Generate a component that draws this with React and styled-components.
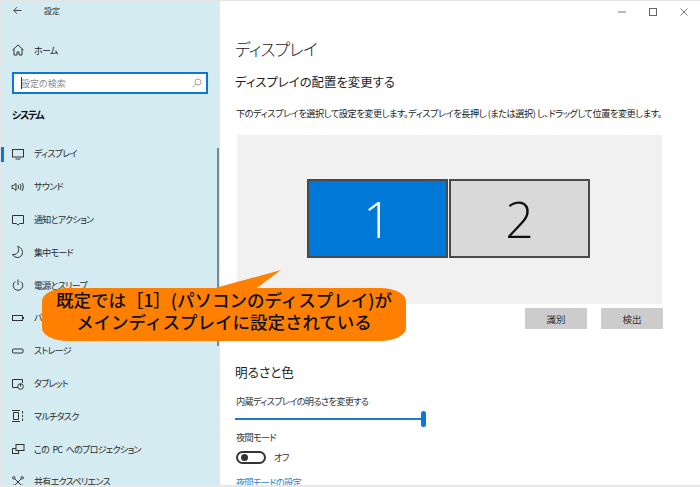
import React from "react";
import styled, { createGlobalStyle } from "styled-components";

const Global = createGlobalStyle`
  html, body { margin: 0; padding: 0; background: #fff; overflow: hidden; }
  * { box-sizing: border-box; }
  body { font-family: "Noto Sans CJK JP", "Noto Sans", sans-serif; color: #222; font-feature-settings: "palt"; }
`;
const Page = styled.div`
  position: relative; width: 700px; height: 487px; display: flex; overflow: hidden;
  background: #fff; border-top: 1px solid #e4e4e4; border-left: 1px solid #e4e4e4; border-bottom: 2px solid #e8e8e8;
`;
const Sidebar = styled.aside`
  position: relative; flex: 0 0 219px; height: 100%; background: #d4ebf2; overflow: hidden;
  display: flex; flex-direction: column;
  & > * { flex: none; }
`;
const TitleBar = styled.div`
  height: 19px; display: flex; align-items: center; padding-left: 12px; gap: 22px; font-size: 8px; color: #333;
`;
const HomeRow = styled.div`
  margin-top: 17px; height: 26px; display: flex; align-items: center; padding-left: 10px; gap: 9px;
  font-size: 9px; letter-spacing: -0.7px; color: #222;
`;
const Search = styled.div`
  margin: 9px 0 0 11px; width: 196px; height: 22px; background: #fff; border: 2px solid #0b78d6;
  display: flex; align-items: center; justify-content: space-between; padding: 0 4px 0 7px;
  font-size: 9px; color: #8a8a8a; position: relative;
  &::before { content: ""; position: absolute; left: 7px; top: 3px; bottom: 3px; width: 1px; background: #333; }
`;
const SectionLabel = styled.div`
  margin: 10px 0 0 11px; height: 22px; line-height: 22px; font-size: 10px; letter-spacing: -1.4px; font-weight: 700; color: #111;
`;
const NavList = styled.div`
  margin-top: 11.6px; display: flex; flex-direction: column;
`;
const NavItem = styled.div`
  position: relative; height: 32.8px; flex: none; display: flex; align-items: center; padding-left: 10px; gap: 9px;
  font-size: 9px; letter-spacing: -0.7px; word-spacing: 2px; color: #2a2a2a; white-space: nowrap;
`;
const Indicator = styled.span`
  position: absolute; left: 0; top: 9px; width: 3px; height: 15px; background: #0b78d6;
`;
const ScrollThumb = styled.div`
  position: absolute; right: 1px; top: 147px; height: 198px; width: 2px; background: #7d8a8f;
`;
const Main = styled.main`
  flex: 1; min-width: 0; display: flex; flex-direction: column; position: relative; padding-left: 15px; overflow: hidden;
  & > * { flex: none; }
`;
const WindowButtons = styled.div`
  align-self: flex-end; height: 22px; display: flex; align-items: center; gap: 23px; padding-right: 12px; color: #666;
`;
const PageTitle = styled.h1`
  margin: 14px 0 0; font-size: 16.5px; letter-spacing: -0.7px; line-height: 24px; font-weight: 300; color: #222;
`;
const Heading = styled.h2`
  margin: 11px 0 0; font-size: 12.4px; line-height: 20px; font-weight: 400; color: #222;
`;
const Description = styled.p`
  margin: 13px 0 0 1px; font-size: 9.2px; letter-spacing: -0.46px; line-height: 16px; color: #222; white-space: nowrap;
`;
const Arrangement = styled.div`
  margin: 14px 0 0 2px; width: 425px; height: 169px; background: #f1f1f1;
  display: flex; justify-content: center; gap: 1px; padding: 44px 2px 0 0;
`;
const Monitor = styled.div`
  width: 141px; height: 79px; border: 2px solid #4a4a4a; display: flex; align-items: center; justify-content: center;
  font-family: "Open Sans", "Noto Sans", sans-serif; font-weight: 300; font-size: 50px; line-height: 1;
  background: ${p => (p.$active ? "#0078d7" : "#d9d9d9")};
  color: ${p => (p.$active ? "#fff" : "#111")};
`;
const ButtonRow = styled.div`
  margin: 4px 0 0 2px; width: 426px; display: flex; justify-content: flex-end; gap: 14px;
`;
const GrayButton = styled.div`
  width: 62px; height: 21px; background: #cccccc; display: flex; align-items: center; justify-content: center;
  font-size: 9.5px; color: #333;
`;
const SubHeading = styled.h3`
  margin: 33px 0 0; font-size: 12.6px; line-height: 20px; font-weight: 400; color: #222;
`;
const SmallLabel = styled.div`
  margin-top: ${p => p.$top}px; font-size: 9.2px; letter-spacing: -0.7px; line-height: 14px; color: #333; padding-left: 1px;
`;
const SliderTrack = styled.div`
  position: relative; margin-top: 10px; width: 190px; height: 2px; background: #1a7fd4;
`;
const SliderThumb = styled.span`
  position: absolute; right: -1px; top: -7px; width: 5px; height: 16px; border-radius: 3px; background: #0b78d6;
`;
const ToggleRow = styled.div`
  margin-top: 6px; display: flex; align-items: center; gap: 8px; font-size: 9.2px; letter-spacing: -0.7px; color: #333; line-height: 14px; padding-left: 1px;
`;
const Toggle = styled.span`
  width: 30px; height: 13px; border: 2px solid #333; border-radius: 7px; display: flex; align-items: center; padding-left: 3px;
  &::before { content: ""; width: 7px; height: 7px; border-radius: 50%; background: #333; }
`;
const LinkText = styled.div`
  margin-top: 11px; font-size: 9.2px; letter-spacing: -0.7px; line-height: 14px; color: #2b7fc8; padding-left: 1px;
`;
const Callout = styled.div`
  position: absolute; left: 41px; top: 287px; width: 364px; height: 53px; padding-bottom: 8px;
  background: #ff8000; border-radius: 26px / 13px;
  display: flex; align-items: center; justify-content: center; text-align: center;
  font-size: 17.5px; line-height: 22px; font-weight: 500; color: #111; white-space: nowrap; font-feature-settings: normal;
`;
const CalloutTail = styled.svg`
  position: absolute; left: 189px; top: 268px; width: 100px; height: 24px;
`;
const IconSvg = styled.svg`
  flex: none; fill: none; stroke: #333; stroke-width: 1;
`;

const I = ({ children }) => <IconSvg width="14" height="14" viewBox="0 0 14 14">{children}</IconSvg>;
const icons = {
  monitor: <I><rect x="1.5" y="2.5" width="11" height="7.5" /><path d="M4.5 12h5" /></I>,
  sound: <I><path d="M1 5.5h1.5L5 3.5v7L2.5 8.5H1z" /><path d="M7 5c.7 1.2.7 2.8 0 4M9 4c1.2 1.8 1.2 4.200 0 6M11 3c1.700 2.400 1.700 5.600 0 8" /></I>,
  message: <I><path d="M1.500 2.500h11v8H8.500L7 12.200 5.500 10.500h-4z" /></I>,
  moon: <I><path d="M7 1.500C9 4 8.500 8 4.500 9.500 4 9.700 3 9.700 2 9.400 3 11.500 5 12.500 7 12.500c3 0 5-2.500 5-5 0-3-2.500-6-5-6z" transform="translate(-0.5 0)" /></I>,
  power: <I><path d="M7 1.500v5.500" /><path d="M4.300 3.500a4.800 4.800 0 1 0 5.400 0" /></I>,
  battery: <I><rect x="1.500" y="4.500" width="10" height="5" /><path d="M12.500 6v2" /></I>,
  storage: <I><rect x="1.500" y="5" width="10.500" height="4" rx="1" /></I>,
  tablet: <I><path d="M7 10.500H1.500v-8h10V6" /><circle cx="9.500" cy="9.500" r="2.800" /><path d="M9.500 7v2.500" /></I>,
  multi: <I><path d="M1 1.500h8M1 12.500h8M2.500 3.500h5v7h-5z" /><path d="M11.500 2v2.500M11.500 6v2M11.500 9.500V12" /></I>,
  project: <I><rect x="5" y="2.500" width="8" height="6" /><path d="M1.500 6.500h3.500M1.500 6.500v5h6V8.500M1 11.500h7" /></I>,
  share: <I><path d="M3.500 3.500l7 7M10.500 3.500l-7 7" /><circle cx="2.800" cy="2.800" r="1.200" /><circle cx="11.200" cy="2.800" r="1.200" /><circle cx="2.800" cy="11.200" r="1.200" /><circle cx="11.200" cy="11.200" r="1.200" /></I>,
};
const nav = [
  ["monitor", "ディスプレイ", true], ["sound", "サウンド"], ["message", "通知とアクション"], ["moon", "集中モード"],
  ["power", "電源とスリープ"], ["battery", "バッテリー"], ["storage", "ストレージ"], ["tablet", "タブレット"],
  ["multi", "マルチタスク"], ["project", "この PC へのプロジェクション"], ["share", "共有エクスペリエンス"],
];

export default function App() {
  return (
    <Page>
      <Global />
      <Sidebar>
        <TitleBar>
          <svg width="9" height="9" viewBox="0 0 9 9" fill="none" stroke="#333" strokeWidth="0.9"><path d="M8.500 4.500H.8M4 1.200L.8 4.500 4 7.800" /></svg>
          <span>設定</span>
        </TitleBar>
        <HomeRow>
          <I><path d="M1.500 7L7 2l5.500 5M3 6v6h3V9h2v3h3V6" /></I>
          <span>ホーム</span>
        </HomeRow>
        <Search>
          <span>設定の検索</span>
          <svg width="10" height="10" viewBox="0 0 10 10" fill="none" stroke="#999" strokeWidth="0.9"><circle cx="6" cy="4" r="3" /><path d="M3.800 6.200L.8 9.200" /></svg>
        </Search>
        <SectionLabel>システム</SectionLabel>
        <NavList>
          {nav.map(([ic, label, active]) => (
            <NavItem key={label}>
              {active && <Indicator />}
              {icons[ic]}
              <span>{label}</span>
            </NavItem>
          ))}
        </NavList>
        <ScrollThumb />
      </Sidebar>
      <Main>
        <WindowButtons>
          <svg width="8" height="8" viewBox="0 0 8 8" stroke="#777" strokeWidth="1"><path d="M0 4h8" /></svg>
          <svg width="8" height="8" viewBox="0 0 8 8" fill="none" stroke="#666" strokeWidth="1"><rect x=".5" y=".5" width="7" height="7" /></svg>
          <svg width="8" height="8" viewBox="0 0 8 8" fill="none" stroke="#666" strokeWidth="0.9"><path d="M.5.500l7 7M7.500.500l-7 7" /></svg>
        </WindowButtons>
        <PageTitle>ディスプレイ</PageTitle>
        <Heading>ディスプレイの配置を変更する</Heading>
        <Description>下のディスプレイを選択して設定を変更します。ディスプレイを長押し (または選択) し、ドラッグして位置を変更します。</Description>
        <Arrangement>
          <Monitor $active>1</Monitor>
          <Monitor>2</Monitor>
        </Arrangement>
        <ButtonRow>
          <GrayButton>識別</GrayButton>
          <GrayButton>検出</GrayButton>
        </ButtonRow>
        <SubHeading>明るさと色</SubHeading>
        <SmallLabel $top={12}>内蔵ディスプレイの明るさを変更する</SmallLabel>
        <SliderTrack><SliderThumb /></SliderTrack>
        <SmallLabel $top={10}>夜間モード</SmallLabel>
        <ToggleRow><Toggle /><span>オフ</span></ToggleRow>
        <LinkText>夜間モードの設定</LinkText>
      </Main>
      <CalloutTail viewBox="0 0 100 24"><path d="M7 24L91 1 60 24z" fill="#ff8000" /></CalloutTail>
      <Callout>既定では［1］(パソコンのディスプレイ)が<br />メインディスプレイに設定されている</Callout>
    </Page>
  );
}
